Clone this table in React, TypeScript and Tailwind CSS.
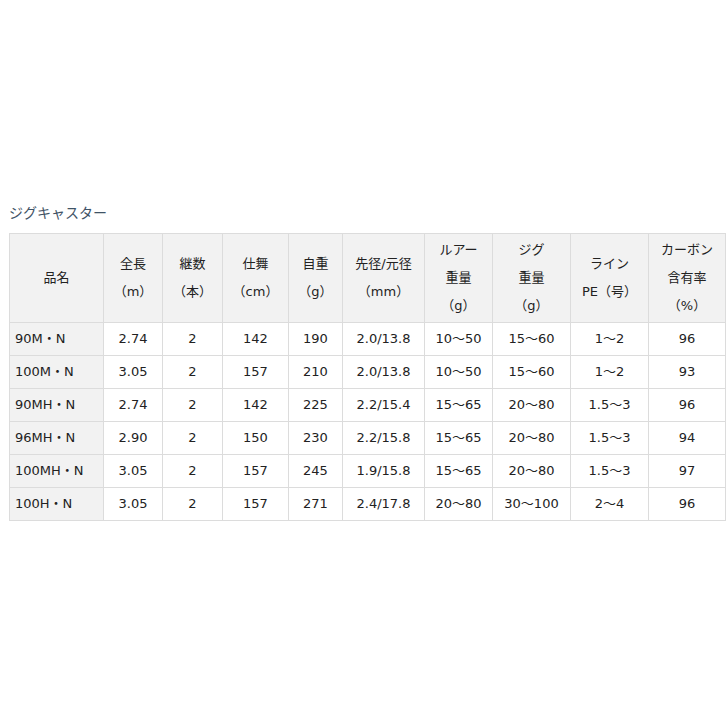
import React from "react";

const rows = [
  ["90M・N", "2.74", "2", "142", "190", "2.0/13.8", "10～50", "15～60", "1～2", "96"],
  ["100M・N", "3.05", "2", "157", "210", "2.0/13.8", "10～50", "15～60", "1～2", "93"],
  ["90MH・N", "2.74", "2", "142", "225", "2.2/15.4", "15～65", "20～80", "1.5～3", "96"],
  ["96MH・N", "2.90", "2", "150", "230", "2.2/15.8", "15～65", "20～80", "1.5～3", "94"],
  ["100MH・N", "3.05", "2", "157", "245", "1.9/15.8", "15～65", "20～80", "1.5～3", "97"],
  ["100H・N", "3.05", "2", "157", "271", "2.4/17.8", "20～80", "30～100", "2～4", "96"],
];

const headers: string[][] = [
  ["品名"],
  ["全長", "（m）"],
  ["継数", "（本）"],
  ["仕舞", "（cm）"],
  ["自重", "（g）"],
  ["先径/元径", "（mm）"],
  ["ルアー", "重量", "（g）"],
  ["ジグ", "重量", "（g）"],
  ["ライン", "PE（号）"],
  ["カーボン", "含有率", "（%）"],
];

const widths = [94, 59, 60, 66, 54, 82, 68, 78, 78, 77];

export default function App() {
  return (
    <div
      className="w-[726px] h-[726px] bg-white pt-[203px] pl-[9px]"
      style={{ fontFamily: '"DejaVu Sans", "Noto Sans CJK JP", sans-serif' }}
    >
      <div className="text-[14px] leading-[20px] text-[#3f5366] mb-[10px]">ジグキャスター</div>
      <table className="table-fixed border-collapse w-[717px] text-[13px] text-[#222]">
        <colgroup>
          {widths.map((w, i) => (
            <col key={i} style={{ width: w }} />
          ))}
        </colgroup>
        <thead>
          <tr className="h-[89px]">
            {headers.map((h, i) => (
              <th
                key={i}
                className="border border-[#dcdcdc] bg-[#f2f2f2] font-normal text-center align-middle leading-[28px] p-0 whitespace-nowrap"
              >
                {h.map((l, j) => (
                  <div key={j}>{l}</div>
                ))}
              </th>
            ))}
          </tr>
        </thead>
        <tbody>
          {rows.map((r, i) => (
            <tr key={i} className="h-[33px]">
              {r.map((c, j) => (
                <td
                  key={j}
                  className={
                    j === 0
                      ? "border border-[#dcdcdc] bg-[#f2f2f2] text-left pl-[5px] p-0 align-middle whitespace-nowrap"
                      : "border border-[#dcdcdc] text-center p-0 align-middle whitespace-nowrap"
                  }
                >
                  {c}
                </td>
              ))}
            </tr>
          ))}
        </tbody>
      </table>
    </div>
  );
}
